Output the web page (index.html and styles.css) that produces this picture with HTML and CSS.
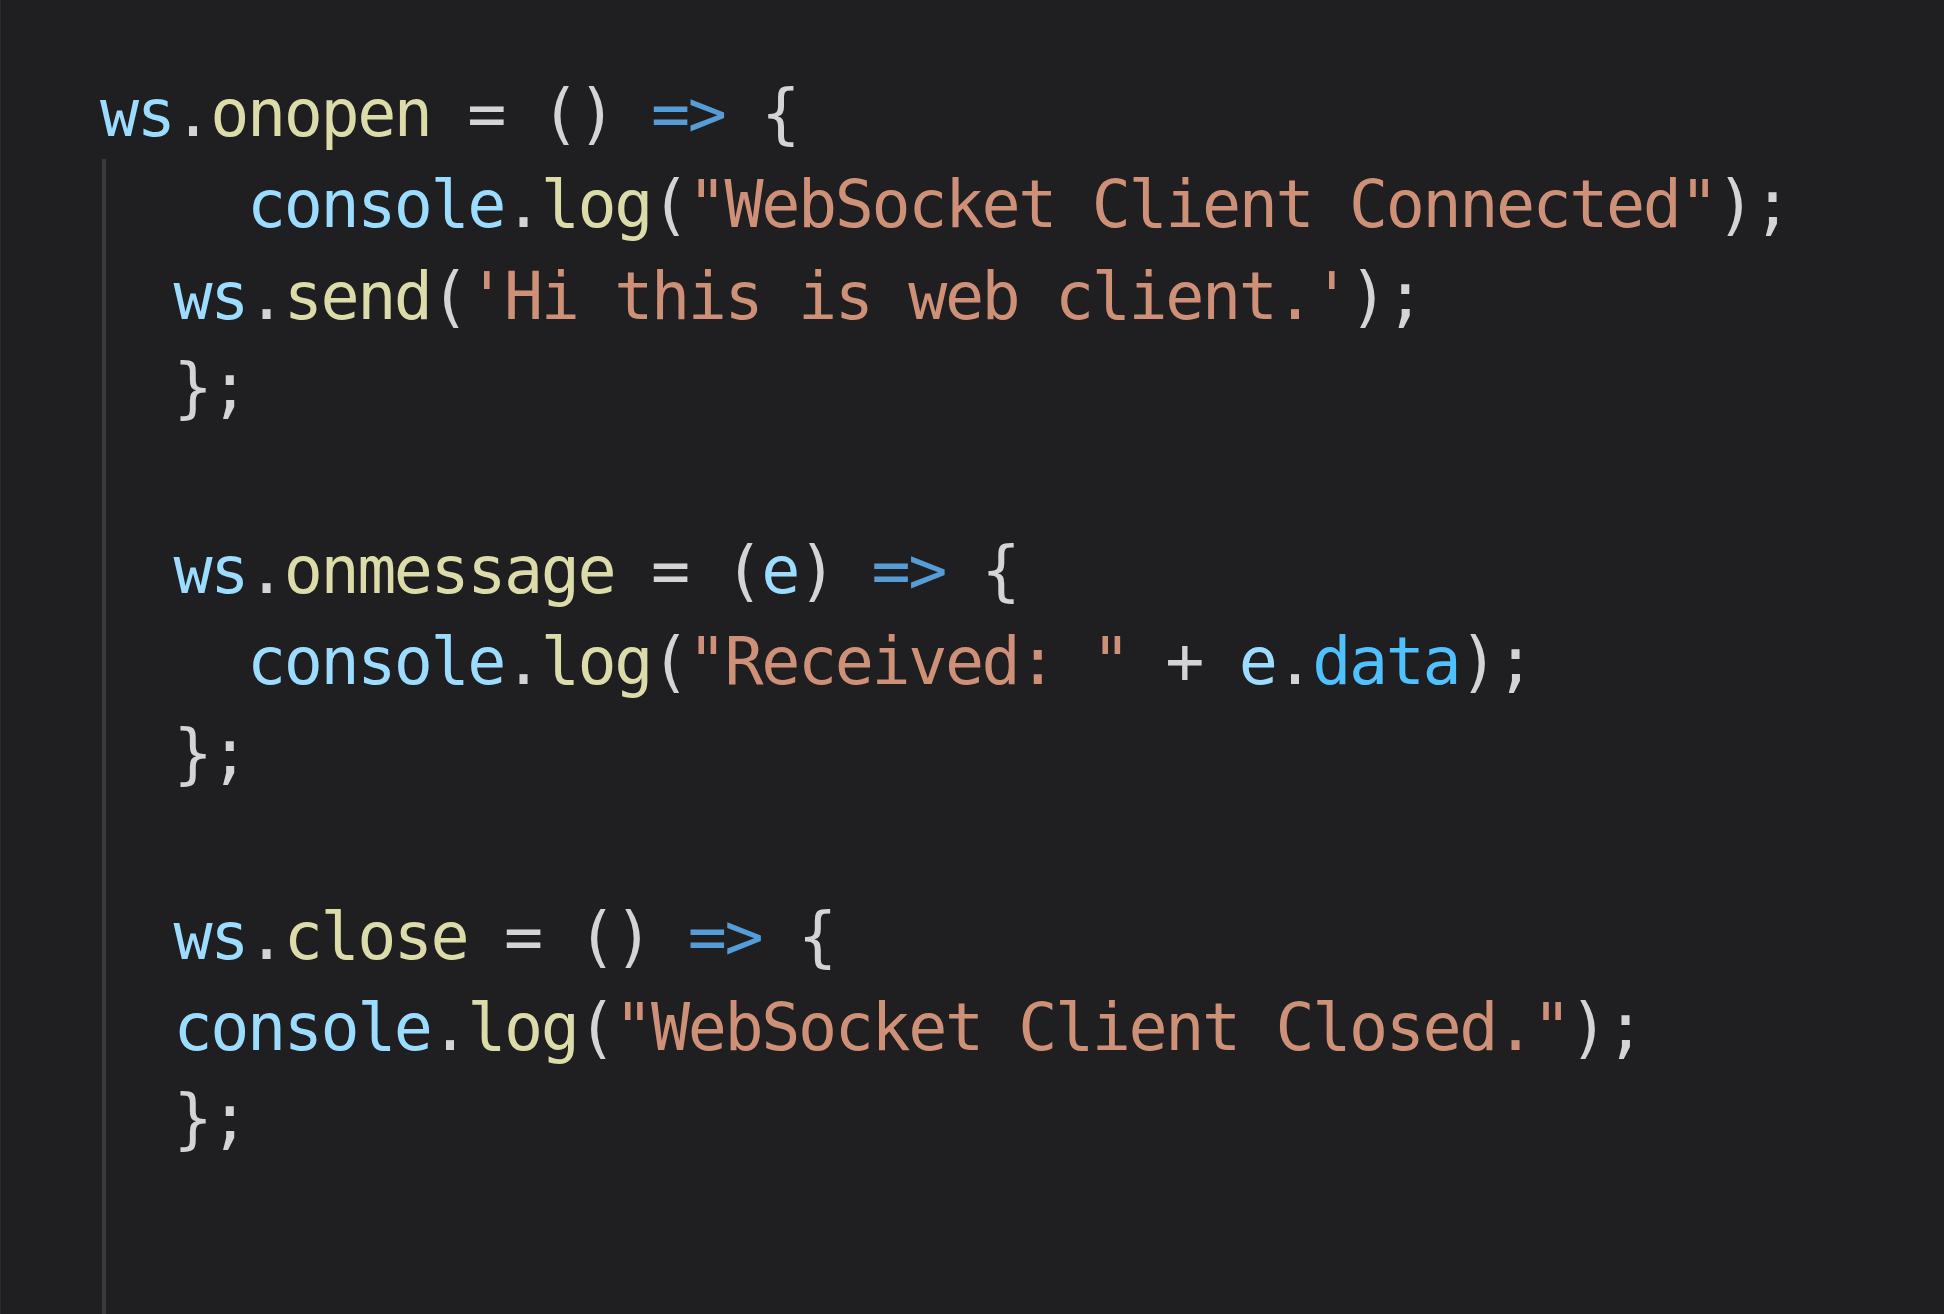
FILE: index.html
```html
<!DOCTYPE html>
<html lang="en">
<head>
<meta charset="utf-8">
<title>ws client</title>
<link rel="stylesheet" href="styles.css">
</head>
<body>
<main class="editor">
  <div class="line"><span class="var">ws</span><span class="pun">.</span><span class="fn">onopen</span><span class="pun"> = () </span><span class="kw">=&gt;</span><span class="pun"> {</span></div>
  <div class="block">
    <div class="line">    <span class="var">console</span><span class="pun">.</span><span class="fn">log</span><span class="pun">(</span><span class="str">"WebSocket Client Connected"</span><span class="pun">);</span></div>
    <div class="line">  <span class="var">ws</span><span class="pun">.</span><span class="fn">send</span><span class="pun">(</span><span class="str">'Hi this is web client.'</span><span class="pun">);</span></div>
    <div class="line">  <span class="pun">};</span></div>
    <div class="line"> </div>
    <div class="line">  <span class="var">ws</span><span class="pun">.</span><span class="fn">onmessage</span><span class="pun"> = (</span><span class="var">e</span><span class="pun">) </span><span class="kw">=&gt;</span><span class="pun"> {</span></div>
    <div class="line">    <span class="var">console</span><span class="pun">.</span><span class="fn">log</span><span class="pun">(</span><span class="str">"Received: "</span><span class="pun"> + </span><span class="var">e</span><span class="pun">.</span><span class="prop">data</span><span class="pun">);</span></div>
    <div class="line">  <span class="pun">};</span></div>
    <div class="line"> </div>
    <div class="line">  <span class="var">ws</span><span class="pun">.</span><span class="fn">close</span><span class="pun"> = () </span><span class="kw">=&gt;</span><span class="pun"> {</span></div>
    <div class="line">  <span class="var">console</span><span class="pun">.</span><span class="fn">log</span><span class="pun">(</span><span class="str">"WebSocket Client Closed."</span><span class="pun">);</span></div>
    <div class="line">  <span class="pun">};</span></div>
  </div>
</main>
</body>
</html>
```
FILE: styles.css
```css
html, body {
  margin: 0;
  padding: 0;
  background: #1f1e21;
}

.editor {
  box-sizing: border-box;
  height: 100vh;
  display: flex;
  flex-direction: column;
  padding: 68px 0 0 99px;
  border-left: 1px solid #2b2a2d;
  font-family: "DejaVu Sans Mono", "Liberation Mono", monospace;
  font-size: 65px;
  letter-spacing: -2.4px;
  line-height: 91.4px;
  color: #d4d4d4;
  overflow: hidden;
}

.block {
  flex: 1;
  background: linear-gradient(to right, transparent 2px, #3b3a3d 2px, #3b3a3d 6px, transparent 6px);
}

.line {
  white-space: pre;
  height: 91.4px;
}

.var { color: #9cdcfe; }
.fn { color: #dcdcaa; }
.pun { color: #d4d4d4; }
.kw { color: #569cd6; }
.str { color: #ce9178; }
.prop { color: #4fc1ff; }
```
